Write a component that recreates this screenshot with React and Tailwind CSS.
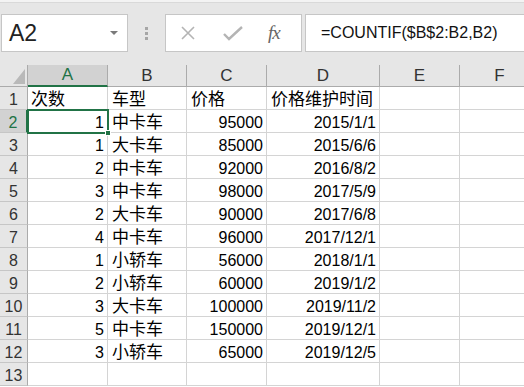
const COLS = [
  { key: 'A', w: 'w-[80px]' },
  { key: 'B', w: 'w-[79px]' },
  { key: 'C', w: 'w-[80px]' },
  { key: 'D', w: 'w-[113px]' },
  { key: 'E', w: 'w-[80px]' },
  { key: 'F', w: 'w-[80px]' },
]

// [次数, 车型, 价格, 价格维护时间]
const ROWS = [
  ['次数', '车型', '价格', '价格维护时间'],
  [1, '中卡车', 95000, '2015/1/1'],
  [1, '大卡车', 85000, '2015/6/6'],
  [2, '中卡车', 92000, '2016/8/2'],
  [3, '中卡车', 98000, '2017/5/9'],
  [2, '大卡车', 90000, '2017/6/8'],
  [4, '中卡车', 96000, '2017/12/1'],
  [1, '小轿车', 56000, '2018/1/1'],
  [2, '小轿车', 60000, '2019/1/2'],
  [3, '大卡车', 100000, '2019/11/2'],
  [5, '中卡车', 150000, '2019/12/1'],
  [3, '小轿车', 65000, '2019/12/5'],
  [null, null, null, null],
]

const FONT = "font-['Liberation_Sans','Noto_Sans_CJK_SC',sans-serif]"

function FormulaBar() {
  return (
    <div className="h-[65px] bg-[#e6e6e6] flex flex-col">
      <div className="h-[3px] bg-[#f3f3f3] border-b border-[#d9d9d9]" />
      <div className="flex items-center pt-[11px] pl-[1px]">
        {/* name box */}
        <div className="w-[127px] h-[38px] bg-white border border-[#c6c6c6] flex items-center justify-between pl-[7px] pr-[9px]">
          <span className="text-[23px] text-[#222]">A2</span>
          <svg width="8" height="5" viewBox="0 0 8 5"><path d="M0 0h8L4 4z" fill="#7a7a7a" /></svg>
        </div>
        <div className="w-[37px] flex flex-col items-center gap-[2px]">
          <span className="w-[3px] h-[3px] bg-[#a6a6a6]" />
          <span className="w-[3px] h-[3px] bg-[#a6a6a6]" />
          <span className="w-[3px] h-[3px] bg-[#a6a6a6]" />
        </div>
        {/* cancel / enter / fx */}
        <div className="w-[137px] h-[38px] bg-white border border-[#c6c6c6] flex items-center pl-[14px]">
          <svg width="16" height="16" viewBox="0 0 16 16">
            <path d="M2 2l12 12M14 2L2 14" stroke="#b4b4b4" strokeWidth="1.6" />
          </svg>
          <svg width="20" height="16" viewBox="0 0 20 16" className="ml-[27px]">
            <path d="M1 9l5 5L19 2" stroke="#b4b4b4" strokeWidth="2.4" fill="none" />
          </svg>
          <span className="ml-[25px] text-[19px] italic text-[#666] font-['Liberation_Serif',serif] tracking-[-1px]">fx</span>
        </div>
        <div className="ml-[3px] flex-1 h-[38px] bg-white border border-r-0 border-[#c6c6c6] flex items-center pl-[15px]">
          <span className="text-[16px] text-[#111]">=COUNTIF($B$2:B2,B2)</span>
        </div>
      </div>
    </div>
  )
}

function Cell({ value, col }) {
  if (value === null || value === undefined) return null
  const isNum = typeof value === 'number' || /^\d/.test(String(value))
  if (isNum) {
    return <span className="ml-auto pr-[3px] text-[16px]">{value}</span>
  }
  return <span className={`text-[17px] ${col === 'A' ? 'pl-[3px]' : 'pl-[4px]'}`}>{value}</span>
}

export default function App() {
  return (
    <div className={`w-[524px] h-[387px] overflow-hidden bg-white text-black ${FONT}`}>
      <FormulaBar />

      <div className="relative">
        {/* column headers */}
        <div className="flex h-[22px] bg-[#e6e6e6]">
          <div className="w-[28px] shrink-0 border-r border-b border-[#ababab] relative">
            <svg width="28" height="22" viewBox="0 0 28 22" className="absolute left-0 top-0">
              <path d="M25 4v15H13z" fill="#b9b9b9" />
            </svg>
          </div>
          {COLS.map(c => (
            <div
              key={c.key}
              className={`${c.w} shrink-0 flex items-center justify-center text-[17px] border-r border-[#ababab] ${
                c.key === 'A'
                  ? 'bg-[#d2d2d2] border-b-2 border-b-[#217346] text-[#217346]'
                  : 'border-b border-b-[#ababab] text-[#333]'
              }`}
            >
              {c.key}
            </div>
          ))}
        </div>

        {/* rows */}
        {ROWS.map((row, i) => {
          const n = i + 1
          return (
            <div key={n} className="flex h-[23px]">
              <div
                className={`w-[28px] shrink-0 flex items-end justify-center leading-[18px] text-[16px] border-b border-[#c6c6c6] ${
                  n === 2
                    ? 'bg-[#d2d2d2] border-r-2 border-r-[#217346] text-[#217346]'
                    : 'bg-[#e6e6e6] border-r border-r-[#ababab] text-[#333]'
                }`}
              >
                {n}
              </div>
              {COLS.map((c, j) => (
                <div
                  key={c.key}
                  className={`${c.w} shrink-0 flex items-end leading-[18px] whitespace-nowrap border-r border-b border-[#d4d4d4]`}
                >
                  <Cell value={row[j]} col={c.key} />
                </div>
              ))}
            </div>
          )
        })}

        {/* active cell A2 */}
        <div className="absolute left-[27px] top-[44px] w-[82px] h-[25px] border-2 border-[#217346] pointer-events-none" />
        <div className="absolute left-[105px] top-[65px] w-[6px] h-[6px] bg-[#217346] border border-white" />
      </div>
    </div>
  )
}
